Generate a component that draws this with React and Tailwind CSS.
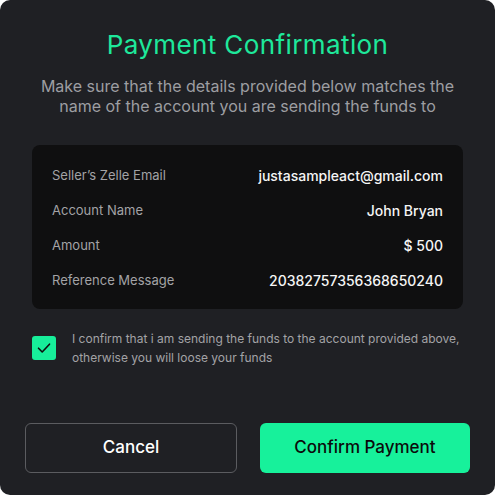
import React, { useState } from "react";

const rows = [
  { label: "Seller’s Zelle Email", value: "justasampleact@gmail.com" },
  { label: "Account Name", value: "John Bryan" },
  { label: "Amount", value: "$ 500" },
  { label: "Reference Message", value: "20382757356368650240" },
];

export default function App() {
  const [checked, setChecked] = useState(true);

  return (
    <div className="w-[495px] h-[495px] bg-white font-['Inter','Liberation_Sans',sans-serif]">
      <div className="w-full h-full bg-[#1f2024] rounded-[10px] flex flex-col">
        {/* Header */}
        <div className="pt-[28px] flex flex-col items-center text-center">
          <h1 className="text-[26px] leading-[34px] text-[#1ee89b] tracking-[0.4px]">
            Payment Confirmation
          </h1>
          <p className="mt-[14px] px-[30px] text-[16px] leading-[20px] text-[#9d9ea2]">
            Make sure that the details provided below matches the name of the account you are sending the funds to
          </p>
        </div>

        {/* Details */}
        <div className="mt-[29px] mx-[32px] bg-[#0f0f10] rounded-[8px] px-[20px] pt-[20px] pb-[18px] flex flex-col gap-[14px]">
          {rows.map((r) => (
            <div key={r.label} className="flex items-center justify-between h-[21px]">
              <span className="text-[13px] text-[#a3a3a6]">{r.label}</span>
              <span className="text-[14px] font-medium text-[#f5f5f5]">{r.value}</span>
            </div>
          ))}
        </div>

        {/* Checkbox */}
        <div className="mt-[20px] ml-[32px] mr-[28px] flex items-start gap-[16px]">
          <button
            onClick={() => setChecked(!checked)}
            className="mt-[7px] w-[24px] h-[24px] shrink-0 rounded-[3px] bg-[#17ee9a] flex items-center justify-center"
          >
            {checked && (
              <svg width="14" height="14" viewBox="0 0 14 14" fill="none">
                <path d="M1.5 7.2L5.2 11L12.5 3.2" stroke="#0d0d0d" strokeWidth="1.6" strokeLinecap="round" strokeLinejoin="round" />
              </svg>
            )}
          </button>
          <p className="text-[12px] leading-[19px] text-[#a3a3a6]">
            I confirm that i am sending the funds to the account provided above, otherwise you will loose your funds
          </p>
        </div>

        {/* Buttons */}
        <div className="mt-auto mb-[22px] mx-[25px] flex gap-[23px]">
          <button className="flex-1 h-[50px] rounded-[6px] border border-[#5b5c60] text-white text-[17px] font-medium">
            Cancel
          </button>
          <button className="flex-1 h-[50px] rounded-[6px] bg-[#17f19b] text-[#0b0b0b] text-[17px] font-medium">
            Confirm Payment
          </button>
        </div>
      </div>
    </div>
  );
}
